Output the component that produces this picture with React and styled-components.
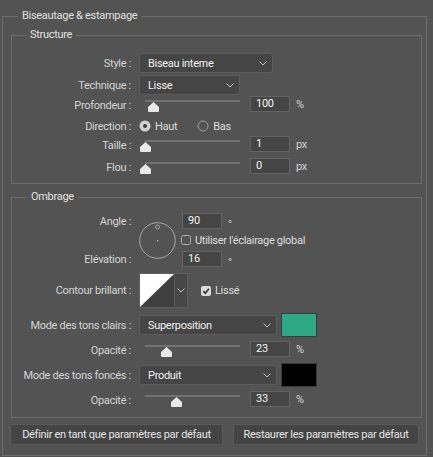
import React from 'react'
import styled, { createGlobalStyle } from 'styled-components'

const GlobalStyle = createGlobalStyle`
  html, body {
    margin: 0;
    padding: 0;
    background: #535353;
  }
  body {
    font-family: Roboto, "Liberation Sans", Arial, sans-serif;
    font-size: 11px;
    letter-spacing: -0.3px;
    color: #d4d4d4;
  }
`

const Page = styled.div`
  padding: 9px 0 0 2px;
`

const Group = styled.fieldset`
  box-sizing: border-box;
  width: ${p => (p.$w ? `${p.$w}px` : 'auto')};
  margin: ${p => p.$mt || 0}px 0 0;
  padding: ${p => p.$pad};
  border: 1px solid #6c6c6c;
  min-width: 0;
`

const Legend = styled.legend`
  margin-left: ${p => p.$ml}px;
  padding: 0 4px;
  line-height: 14px;
  color: #e0e0e0;
`

const Row = styled.div`
  display: flex;
  align-items: center;
  height: ${p => p.$h || 16}px;
  margin-top: ${p => p.$mt || 0}px;
`

const Label = styled.div`
  flex: none;
  width: 119px;
  margin-right: 8px;
  padding-top: ${p => p.$drop || 0}px;
  text-align: right;
  white-space: nowrap;
`

const Select = styled.div`
  flex: none;
  box-sizing: border-box;
  width: ${p => p.$w}px;
  height: 20px;
  display: flex;
  align-items: center;
  justify-content: space-between;
  padding: 0 5px 0 8px;
  background: #454545;
  border: 1px solid #5c5c5c;
  border-radius: 3px;
  color: #f0f0f0;
`

const SliderBox = styled.div`
  position: relative;
  flex: none;
  width: 106px;
  height: 16px;
`

const Track = styled.div`
  position: absolute;
  left: 6px;
  right: 5px;
  top: 4px;
  height: 2px;
  background: #727272;
`

const ThumbSvg = styled.svg`
  position: absolute;
  top: 6px;
`

const NumField = styled.div`
  flex: none;
  box-sizing: border-box;
  width: 40px;
  height: 16px;
  margin-left: ${p => p.$ml || 0}px;
  padding-left: 5px;
  line-height: 14px;
  background: #454545;
  border: 1px solid #636363;
  color: #f4f4f4;
`

const Unit = styled.span`
  margin-left: 6px;
  color: #d4d4d4;
`

const Degree = styled.span`
  margin-left: 6px;
  transform: translateY(3px);
`

const Option = styled.label`
  display: flex;
  align-items: center;
  gap: 4px;
  margin-right: ${p => p.$mr || 0}px;
  margin-left: ${p => p.$ml || 0}px;
  color: #dedede;
`

const AngleBlock = styled.div`
  display: grid;
  grid-template-columns: 127px 43px auto;
  grid-template-rows: 16px 22px 16px;
`

const GridLabel = styled.div`
  grid-column: 1;
  grid-row: ${p => p.$row};
  align-self: center;
  padding-right: 8px;
  text-align: right;
`

const Dial = styled.svg`
  grid-column: 2;
  grid-row: 1 / 4;
  align-self: center;
`

const Cell = styled.div`
  grid-column: 3;
  grid-row: ${p => p.$row};
  display: flex;
  align-items: center;
`

const ContourPick = styled.div`
  display: flex;
  height: 35px;
  border: 1px solid #5e5e5e;
  box-sizing: border-box;
`

const ContourDrop = styled.div`
  width: 12px;
  display: flex;
  align-items: center;
  justify-content: center;
  background: #474747;
  border-left: 1px solid #5e5e5e;
`

const Swatch = styled.div`
  flex: none;
  width: 36px;
  height: 24px;
  margin-left: 4px;
  box-sizing: border-box;
  background: ${p => p.$color};
  border: 1px solid #3b3b3b;
`

const Buttons = styled.div`
  display: flex;
  gap: 10px;
  margin: 6px 0 0 -1px;
`

const Button = styled.button`
  width: ${p => p.$w}px;
  height: 21px;
  padding: 0;
  background: #444444;
  border: 1px solid #5a5a5a;
  border-radius: 2px;
  color: #e4e4e4;
  font: inherit;
  letter-spacing: inherit;
`

const Chevron = () => (
  <svg width="8" height="5" viewBox="0 0 8 5">
    <path d="M0.5 0.5 L4 4 L7.5 0.5" fill="none" stroke="#bdbdbd" strokeWidth="1" />
  </svg>
)

const Slider = ({ frac }) => (
  <SliderBox>
    <Track />
    <ThumbSvg width="11" height="10" viewBox="0 0 11 10" style={{ left: 6 + frac * 95 - 5.5 }}>
      <path d="M5.5 0 L11 5 V9 Q11 10 10 10 H1 Q0 10 0 9 V5 Z" fill="#e8e8e8" />
    </ThumbSvg>
  </SliderBox>
)

const Radio = ({ on }) => (
  <svg width="12" height="12" viewBox="0 0 12 12">
    {on ? (
      <>
        <circle cx="6" cy="6" r="5.5" fill="#d2d2d2" />
        <circle cx="6" cy="6" r="2" fill="#3a3a3a" />
      </>
    ) : (
      <circle cx="6" cy="6" r="5" fill="none" stroke="#a0a0a0" />
    )}
  </svg>
)

const Check = ({ on }) => (
  <svg width="10" height="10" viewBox="0 0 10 10">
    {on ? (
      <>
        <rect x="0" y="0" width="10" height="10" rx="2" fill="#dadada" />
        <path d="M2.4 5.1 L4.3 7.2 L7.9 2.8" fill="none" stroke="#333" strokeWidth="1.6" />
      </>
    ) : (
      <rect x="0.5" y="0.5" width="9" height="9" rx="2" fill="none" stroke="#b0b0b0" />
    )}
  </svg>
)

const SliderRow = ({ label, frac, value, unit, mt }) => (
  <Row $mt={mt}>
    <Label $drop={2}>{label}</Label>
    <Slider frac={frac} />
    <NumField $ml={5}>{value}</NumField>
    <Unit>{unit}</Unit>
  </Row>
)

export default function App() {
  return (
    <Page>
      <GlobalStyle />
      <Group $w={425} $pad="5px 4px 10px 8px">
        <Legend $ml={7}>Biseautage &amp; estampage</Legend>

        <Group $pad="11px 0 9px 0">
          <Legend $ml={14}>Structure</Legend>
          <Row $h={20}>
            <Label>Style :</Label>
            <Select $w={134}>Biseau interne<Chevron /></Select>
          </Row>
          <Row $h={20} $mt={2}>
            <Label>Technique :</Label>
            <Select $w={101}>Lisse<Chevron /></Select>
          </Row>
          <SliderRow label="Profondeur :" frac={0.09} value="100" unit="%" mt={1} />
          <Row $mt={6}>
            <Label>Direction :</Label>
            <Option $mr={20}><Radio on />Haut</Option>
            <Option><Radio />Bas</Option>
          </Row>
          <SliderRow label="Taille :" frac={0} value="1" unit="px" mt={2} />
          <SliderRow label="Flou :" frac={0} value="0" unit="px" mt={6} />
        </Group>

        <Group $mt={6} $pad="9px 0 10px 0">
          <Legend $ml={15}>Ombrage</Legend>
          <AngleBlock>
            <GridLabel $row={1}>Angle :</GridLabel>
            <Dial width="37" height="37" viewBox="0 0 37 37">
              <circle cx="18.5" cy="18.5" r="17.8" fill="none" stroke="#a6a6a6" />
              <circle cx="18.5" cy="5" r="2" fill="none" stroke="#a6a6a6" />
              <rect x="18" y="18" width="1.2" height="1.2" fill="#c0c0c0" />
            </Dial>
            <Cell $row={1}>
              <NumField>90</NumField>
              <Degree>°</Degree>
            </Cell>
            <Cell $row={2}>
              <Option $ml={-1}><Check />Utiliser l'éclairage global</Option>
            </Cell>
            <GridLabel $row={3}>Elévation :</GridLabel>
            <Cell $row={3}>
              <NumField>16</NumField>
              <Degree>°</Degree>
            </Cell>
          </AngleBlock>

          <Row $h={35} $mt={6}>
            <Label>Contour brillant :</Label>
            <ContourPick>
              <svg width="34" height="33" viewBox="0 0 34 33">
                <rect width="34" height="33" fill="#3f3f3f" />
                <polygon points="0,0 34,0 0,33" fill="#ffffff" />
              </svg>
              <ContourDrop><Chevron /></ContourDrop>
            </ContourPick>
            <Option $ml={13}><Check on />Lissé</Option>
          </Row>

          <Row $h={24} $mt={5}>
            <Label>Mode des tons clairs :</Label>
            <Select $w={138}>Superposition<Chevron /></Select>
            <Swatch $color="#2ea985" />
          </Row>
          <SliderRow label="Opacité :" frac={0.23} value="23" unit="%" mt={4} />

          <Row $h={24} $mt={6}>
            <Label>Mode des tons foncés :</Label>
            <Select $w={138}>Produit<Chevron /></Select>
            <Swatch $color="#000000" />
          </Row>
          <SliderRow label="Opacité :" frac={0.33} value="33" unit="%" mt={4} />
        </Group>

        <Buttons>
          <Button $w={213}>Définir en tant que paramètres par défaut</Button>
          <Button $w={186}>Restaurer les paramètres par défaut</Button>
        </Buttons>
      </Group>
    </Page>
  )
}
